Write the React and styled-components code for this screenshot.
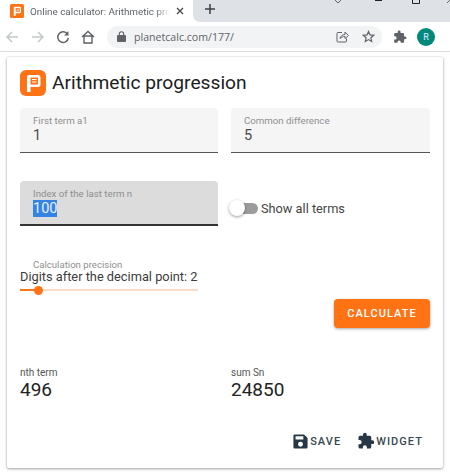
import React from 'react';
import styled, { createGlobalStyle } from 'styled-components';

const Global = createGlobalStyle`
  html, body { margin: 0; padding: 0; background: #fff; }
  body { width: 450px; height: 476px; overflow: hidden; font-family: Roboto, "Liberation Sans", sans-serif; }
`;

const Page = styled.div`
  width: 450px;
  height: 476px;
  display: flex;
  flex-direction: column;
  overflow: hidden;
`;

const TabStrip = styled.div`
  height: 22px;
  background: #fff;
  display: flex;
  align-items: flex-start;
`;

const Tab = styled.div`
  width: 193px;
  height: 22px;
  flex: none;
  display: flex;
  align-items: center;
  padding-left: 10px;
  box-sizing: border-box;
`;

const TabTitle = styled.span`
  width: 140px;
  margin-left: 6px;
  font: 9.9px Roboto, "Liberation Sans", sans-serif;
  color: #5f6368;
  white-space: nowrap;
  overflow: hidden;
  -webkit-mask-image: linear-gradient(90deg, #000 90%, transparent);
  mask-image: linear-gradient(90deg, #000 90%, transparent);
`;

const TabClose = styled.svg`
  display: block;
  margin-left: 6px;
`;

const TabIcon = styled.svg`
  display: block;
  flex: none;
`;

const TabRest = styled.div`
  flex: 1;
  height: 22px;
  background: #dee1e6;
  border-radius: 0 0 0 7px;
  position: relative;
`;

const NewTab = styled.svg`
  margin: 1px 0 0 9px;
  display: block;
`;

const WindowControls = styled.svg`
  position: absolute;
  right: 0;
  top: 0;
`;

const Toolbar = styled.div`
  height: 29px;
  background: #fff;
  border-bottom: 1px solid #dadce0;
  display: flex;
  align-items: center;
  padding-left: 5px;
`;

const NavIcon = styled.svg`
  display: block;
  flex: none;
  margin-right: ${p => p.$gap}px;
`;

const Omnibox = styled.div`
  width: 275px;
  height: 22px;
  margin-left: 11px;
  border-radius: 11px;
  background: #f1f3f4;
  display: flex;
  align-items: center;
  padding-left: 10px;
  box-sizing: border-box;
  font: 10.6px "Open Sans", "Liberation Sans", sans-serif;
  color: #5f6368;
`;

const Url = styled.span`
  margin-left: 8px;
  flex: 1;
`;

const OmniIcon = styled.svg`
  display: block;
  flex: none;
  margin-right: ${p => p.$gap}px;
`;

const ExtensionIcon = styled.svg`
  display: block;
  flex: none;
  margin-left: 11px;
`;

const Avatar = styled.div`
  width: 18px;
  height: 18px;
  margin-left: 10px;
  border-radius: 50%;
  background: #00897b;
  color: #c5dcf5;
  font-size: 9px;
  font-weight: 500;
  display: flex;
  align-items: center;
  justify-content: center;
`;

const Content = styled.div`
  flex: 1;
  padding: 5px 7px 0;
`;

const Card = styled.div`
  width: 436px;
  height: 411px;
  box-sizing: border-box;
  padding: 12px 13px 0;
  background: #fff;
  border-radius: 2px;
  box-shadow: 0 1px 3px rgba(0, 0, 0, 0.35), 0 0 2px rgba(0, 0, 0, 0.12);
`;

const Header = styled.div`
  display: flex;
  align-items: center;
  gap: 6px;
  height: 27px;
`;

const Title = styled.h1`
  margin: 0;
  font-size: 19.2px;
  font-weight: 400;
  color: #212121;
`;

const Grid = styled.div`
  display: grid;
  grid-template-columns: 198px 199px;
  column-gap: 13px;
  margin-top: 12px;
`;

const Field = styled.div`
  height: 45px;
  box-sizing: border-box;
  padding: 7px 13px 0;
  border-radius: 4px 4px 0 0;
  background: ${p => (p.$focused ? '#dcdcdc' : '#f5f5f5')};
  border-bottom: ${p => (p.$focused ? '2px solid #333' : '1px solid #555')};
`;

const FieldLabel = styled.div`
  font-size: 9.7px;
  line-height: 12px;
  color: #8f8f8f;
  white-space: nowrap;
`;

const FieldValue = styled.div`
  font-size: 14.5px;
  line-height: 17px;
  color: #4a4a4a;
`;

const Selected = styled.span`
  background: #3584e4;
  color: #e8f0fb;
`;

const SecondRow = styled(Grid)`
  margin-top: 28px;
  align-items: center;
`;

const SwitchRow = styled.div`
  display: flex;
  align-items: center;
  margin-top: 10px;
  font-size: 12.75px;
  color: #444;
`;

const SwitchTrack = styled.div`
  position: relative;
  width: 26px;
  height: 11px;
  margin: 0 3px 0 1px;
  border-radius: 6px;
  background: #9b9b9b;
`;

const SwitchThumb = styled.div`
  position: absolute;
  left: -3px;
  top: -3px;
  width: 16px;
  height: 16px;
  border-radius: 50%;
  background: #fff;
  box-shadow: 0 1px 3px rgba(0, 0, 0, 0.4);
`;

const Precision = styled.div`
  width: 178px;
  margin-top: 34px;
`;

const PrecisionLabel = styled.div`
  padding-left: 13px;
  font-size: 9.6px;
  line-height: 10px;
  color: #8f8f8f;
`;

const PrecisionText = styled.div`
  font-size: 12.8px;
  line-height: 14px;
  color: #3c3c3c;
  white-space: nowrap;
`;

const SliderTrack = styled.div`
  position: relative;
  height: 2px;
  margin-top: 5px;
  background: #fddcc8;
`;

const SliderFill = styled.div`
  width: 18px;
  height: 2px;
  background: #ff7315;
`;

const SliderThumb = styled.div`
  position: absolute;
  left: 14px;
  top: -3px;
  width: 9px;
  height: 9px;
  border-radius: 50%;
  background: #ff7315;
`;

const ButtonRow = styled.div`
  display: flex;
  justify-content: flex-end;
  margin-top: 8px;
`;

const CalcButton = styled.button`
  width: 96px;
  height: 29px;
  padding: 0;
  border: 0;
  border-radius: 4px;
  background: #ff7315;
  color: #fff;
  font: 500 11px Roboto, sans-serif;
  letter-spacing: 1.05px;
  box-shadow: 0 1px 3px rgba(0, 0, 0, 0.35);
`;

const Results = styled(Grid)`
  margin-top: 39px;
  column-gap: 13px;
`;

const ResultLabel = styled.div`
  font-size: 10px;
  line-height: 12px;
  color: #555;
`;

const ResultValue = styled.div`
  font-size: 19px;
  line-height: 22px;
  color: #222;
`;

const Actions = styled.div`
  display: flex;
  justify-content: flex-end;
  align-items: center;
  gap: 16px;
  margin-top: 31px;
  padding-right: 7px;
`;

const Action = styled.div`
  display: flex;
  align-items: center;
  gap: 1px;
  font-size: 11px;
  font-weight: 500;
  letter-spacing: 1.05px;
  color: #37474f;
`;

const Logo = ({ size, radius }) => (
  <TabIcon width={size} height={size} viewBox="0 0 26 26">
    <rect width="26" height="26" rx={radius} fill="#ff7315" />
    <path d="M7 22V7a2 2 0 0 1 2-2h9a2.500 2.500 0 0 1 2.500 2.500v7a2.500 2.500 0 0 1-2.500 2.500h-7.500v5z" fill="#fff" />
    <rect x="10.500" y="7.500" width="7.500" height="7" rx="0.500" fill="#ff7315" />
    <path d="M12 9.500h4.500M12 12h4.500" stroke="#fff" strokeWidth="1.100" />
  </TabIcon>
);

const puzzle = 'M20.500 11H19V7a2 2 0 0 0-2-2h-4V3.500a2.500 2.500 0 0 0-5 0V5H4a2 2 0 0 0-2 2v3.800h1.500a2.700 2.700 0 0 1 0 5.400H2V20a2 2 0 0 0 2 2h3.800v-1.500a2.700 2.700 0 0 1 5.400 0V22H17a2 2 0 0 0 2-2v-4h1.500a2.500 2.500 0 0 0 0-5z';

export default function App() {
  return (
    <Page>
      <Global />
      <TabStrip>
        <Tab>
          <Logo size={14} radius={3} />
          <TabTitle>Online calculator: Arithmetic progression</TabTitle>
          <TabClose width="8" height="8" viewBox="0 0 8 8">
            <path d="M1 1l6 6M7 1L1 7" stroke="#45494d" strokeWidth="1.300" />
          </TabClose>
        </Tab>
        <TabRest>
          <NewTab width="16" height="16" viewBox="0 0 16 16">
            <path d="M8 3v10M3 8h10" stroke="#3c4043" strokeWidth="1.500" />
          </NewTab>
          <WindowControls width="115" height="5" viewBox="0 0 115 5">
            <path d="M0 0l3 3 3-3" fill="none" stroke="#5f6368" />
            <path d="M40 .5h7" stroke="#222" />
            <path d="M77.500 0v3.500h7V0" fill="none" stroke="#222" />
            <path d="M112 3l3-3" stroke="#666" />
          </WindowControls>
        </TabRest>
      </TabStrip>
      <Toolbar>
        <NavIcon $gap={12} width="14" height="14" viewBox="0 0 14 14">
          <path d="M13 7H2M7 2L2 7l5 5" fill="none" stroke="#c4c7c9" strokeWidth="1.500" />
        </NavIcon>
        <NavIcon $gap={11} width="14" height="14" viewBox="0 0 14 14">
          <path d="M1 7h11M7 2l5 5-5 5" fill="none" stroke="#c4c7c9" strokeWidth="1.500" />
        </NavIcon>
        <NavIcon $gap={10} width="14" height="14" viewBox="0 0 14 14">
          <path d="M11.500 4.200A5.300 5.300 0 1 0 12.300 8" fill="none" stroke="#5f6368" strokeWidth="1.500" />
          <path d="M12.500 1v4.500H8z" fill="#5f6368" />
        </NavIcon>
        <NavIcon $gap={0} width="16" height="16" viewBox="0 0 16 16">
          <path d="M2 8l6-5.500L14 8M4 7v7h8V7z" fill="none" stroke="#5f6368" strokeWidth="1.400" />
        </NavIcon>
        <Omnibox>
          <svg width="9" height="11" viewBox="0 0 9 11">
            <rect y="4" width="9" height="7" rx="1" fill="#5f6368" />
            <path d="M2.300 4.500V3a2.200 2.200 0 0 1 4.400 0v1.500" fill="none" stroke="#5f6368" strokeWidth="1.100" />
          </svg>
          <Url>planetcalc.com/177/</Url>
          <OmniIcon $gap={13} width="13" height="13" viewBox="0 0 13 13">
            <path d="M6 2.500H2a1 1 0 0 0-1 1V11a1 1 0 0 0 1 1h7.500a1 1 0 0 0 1-1V8.500" fill="none" stroke="#5f6368" />
            <path d="M4 8.500C4.500 6 6.500 4.500 9 4.500V2l3.500 3.500L9 8.500V6.500C7 6.500 5.300 7 4 8.500z" fill="none" stroke="#5f6368" />
          </OmniIcon>
          <OmniIcon $gap={7} width="13" height="13" viewBox="0 0 13 13">
            <path d="M6.500 1.500l1.500 3.400 3.700.4-2.800 2.500.8 3.700-3.200-1.900-3.200 1.900.8-3.700L1.300 5.300 5 4.900z" fill="none" stroke="#5f6368" strokeWidth="1.200" />
          </OmniIcon>
        </Omnibox>
        <ExtensionIcon width="14" height="14" viewBox="0 0 24 24">
          <path d={puzzle} fill="#5f6368" />
        </ExtensionIcon>
        <Avatar>R</Avatar>
      </Toolbar>
      <Content>
        <Card>
          <Header>
            <Logo size={26} radius={6} />
            <Title>Arithmetic progression</Title>
          </Header>
          <Grid>
            <Field>
              <FieldLabel>First term a1</FieldLabel>
              <FieldValue>1</FieldValue>
            </Field>
            <Field>
              <FieldLabel>Common difference</FieldLabel>
              <FieldValue>5</FieldValue>
            </Field>
          </Grid>
          <SecondRow>
            <Field $focused>
              <FieldLabel>Index of the last term n</FieldLabel>
              <FieldValue><Selected>100</Selected></FieldValue>
            </Field>
            <SwitchRow>
              <SwitchTrack><SwitchThumb /></SwitchTrack>
              Show all terms
            </SwitchRow>
          </SecondRow>
          <Precision>
            <PrecisionLabel>Calculation precision</PrecisionLabel>
            <PrecisionText>Digits after the decimal point: 2</PrecisionText>
            <SliderTrack>
              <SliderFill />
              <SliderThumb />
            </SliderTrack>
          </Precision>
          <ButtonRow>
            <CalcButton>CALCULATE</CalcButton>
          </ButtonRow>
          <Results>
            <div>
              <ResultLabel>nth term</ResultLabel>
              <ResultValue>496</ResultValue>
            </div>
            <div>
              <ResultLabel>sum Sn</ResultLabel>
              <ResultValue>24850</ResultValue>
            </div>
          </Results>
          <Actions>
            <Action>
              <svg width="17" height="17" viewBox="0 0 24 24">
                <path d="M17 2H4a2 2 0 0 0-2 2v16a2 2 0 0 0 2 2h16a2 2 0 0 0 2-2V7zM12 19.500a3.500 3.500 0 1 1 0-7 3.500 3.500 0 0 1 0 7zM16 9H5V4.500h11z" fill="#263746" />
              </svg>
              SAVE
            </Action>
            <Action>
              <svg width="18" height="18" viewBox="0 0 24 24">
                <path d={puzzle} fill="#263746" />
              </svg>
              WIDGET
            </Action>
          </Actions>
        </Card>
      </Content>
    </Page>
  );
}
